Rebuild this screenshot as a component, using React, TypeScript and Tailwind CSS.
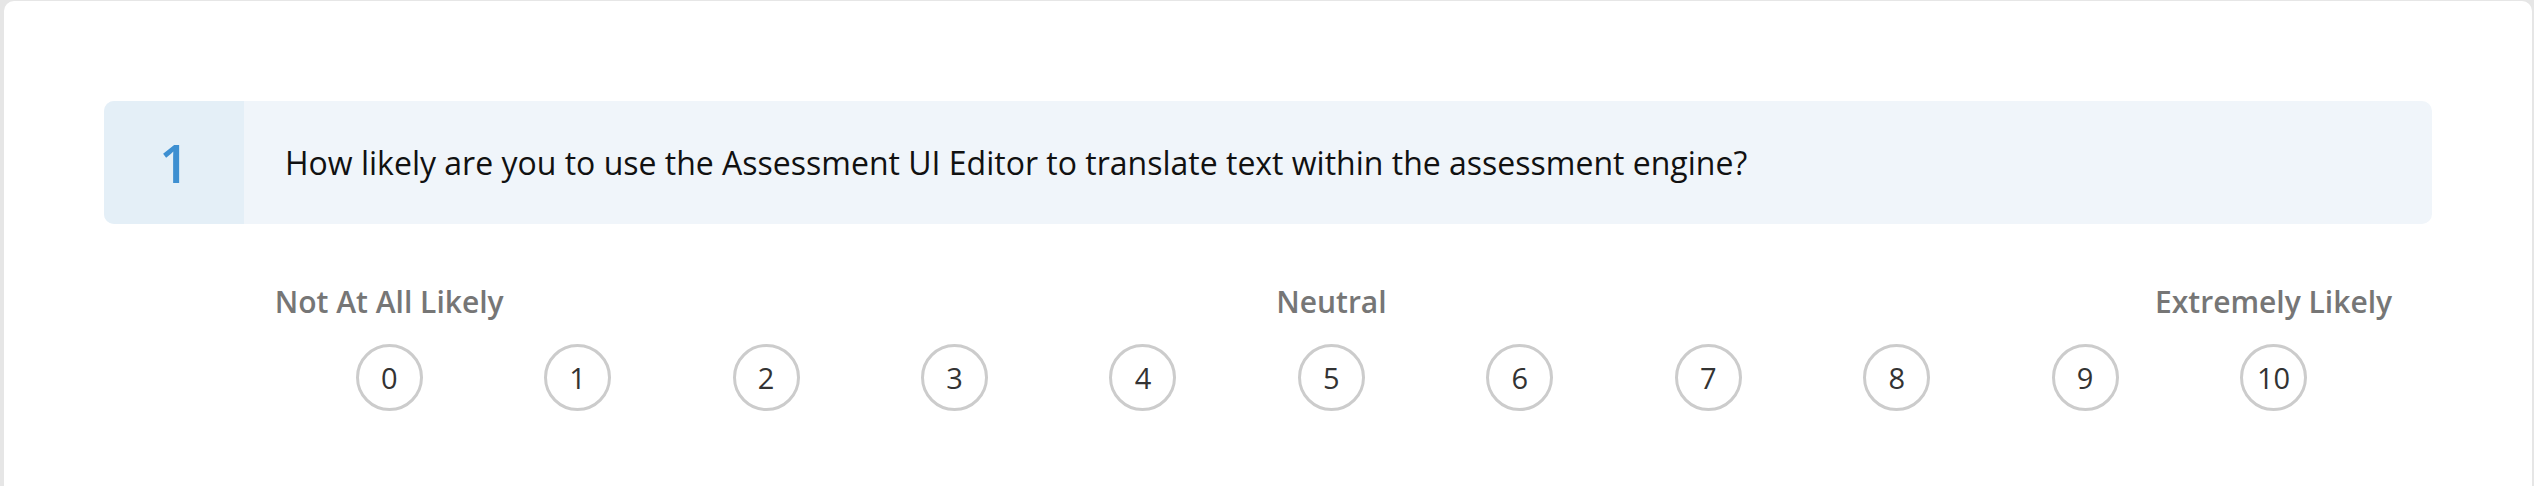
import React from 'react';

const SCALE = [0, 1, 2, 3, 4, 5, 6, 7, 8, 9, 10];

const ScalePoint = ({ value }: { value: number }) => (
  <div className="flex justify-center">
    <button
      type="button"
      className="w-[67px] h-[67px] rounded-full border-[3.5px] border-[#cccccc] bg-white flex items-center justify-center text-[29px] text-[#333333] leading-none"
    >
      {value}
    </button>
  </div>
);

const App: React.FC = () => {
  return (
    <div
      className="w-[2534px] h-[486px] bg-[#e6e6e6] pt-[1px] pl-[4px] pr-[2px] overflow-hidden"
      style={{ fontFamily: '"Open Sans", "Noto Sans", sans-serif' }}
    >
      <div className="h-[600px] bg-white rounded-[10px] px-[100px] pt-[100px]">
        {/* question header */}
        <div className="flex h-[123px] rounded-[10px] overflow-hidden bg-[#f0f5fa]">
          <div className="w-[140px] shrink-0 bg-[#e4eff7] flex items-center justify-center text-[52px] font-semibold text-[#3d8fd1] leading-none">
            1
          </div>
          <div className="flex items-center pl-[41px] text-[32px] text-[#111111]">
            How likely are you to use the Assessment UI Editor to translate text within the assessment engine?
          </div>
        </div>

        {/* rating scale */}
        <div className="ml-[191px] mt-[57px] w-[2073px]">
          <div className="grid grid-cols-[repeat(11,188.45px)] text-[30px] font-semibold text-[#767676] leading-[41px]">
            <div className="col-start-1 flex justify-center whitespace-nowrap">Not At All Likely</div>
            <div className="col-start-6 flex justify-center whitespace-nowrap">Neutral</div>
            <div className="col-start-11 flex justify-center whitespace-nowrap">Extremely Likely</div>
          </div>
          <div className="grid grid-cols-[repeat(11,188.45px)] mt-[22px]">
            {SCALE.map((n) => (
              <ScalePoint key={n} value={n} />
            ))}
          </div>
        </div>
      </div>
    </div>
  );
};

export default App;
